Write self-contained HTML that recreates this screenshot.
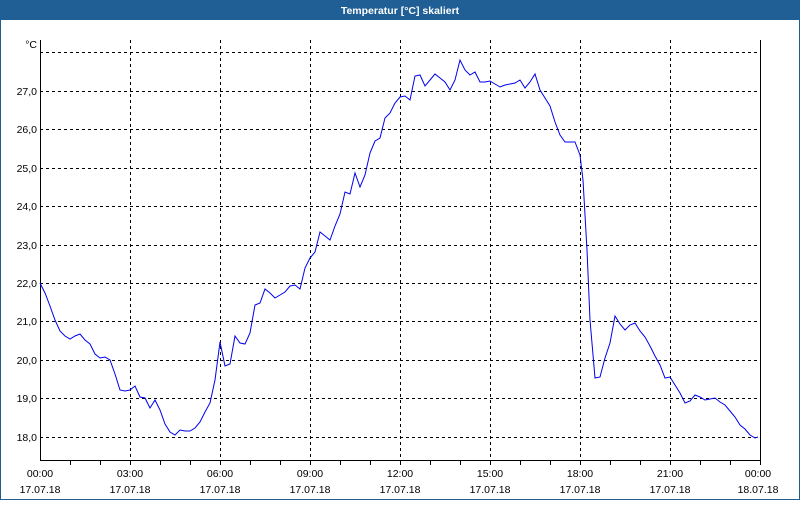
<!DOCTYPE html>
<html><head><meta charset="utf-8"><style>
body{margin:0;width:800px;height:500px;overflow:hidden;background:#fff;font-family:"Liberation Sans",sans-serif}
</style></head><body>
<svg width="800" height="500" xmlns="http://www.w3.org/2000/svg" font-family="Liberation Sans, sans-serif" font-size="10.5">
<rect x="0" y="0" width="800" height="500" fill="#fff"/>
<rect x="0" y="0" width="800" height="20" fill="#1f5f96"/>
<rect x="0.5" y="19.5" width="799" height="480" fill="none" stroke="#1f5f96"/>
<text x="400" y="14" fill="#fff" font-weight="bold" text-anchor="middle" font-size="10.5">Temperatur [°C] skaliert</text>
<g stroke="#000" stroke-dasharray="3,3" stroke-width="1" fill="none">
<path d="M130.5 40V460M220.5 40V460M310.5 40V460M400.5 40V460M490.5 40V460M580.5 40V460M670.5 40V460"/>
<path d="M40 52.5H760M40 91.5H760M40 129.5H760M40 168.5H760M40 206.5H760M40 245.5H760M40 283.5H760M40 321.5H760M40 360.5H760M40 398.5H760M40 437.5H760"/>
</g>
<path d="M40.5 40V460.5H760.5V40" stroke="#000" fill="none"/>
<path d="M70.5 461v4M100.5 461v4M130.5 461v4M160.5 461v4M190.5 461v4M220.5 461v4M250.5 461v4M280.5 461v4M310.5 461v4M340.5 461v4M370.5 461v4M400.5 461v4M430.5 461v4M460.5 461v4M490.5 461v4M520.5 461v4M550.5 461v4M580.5 461v4M610.5 461v4M640.5 461v4M670.5 461v4M700.5 461v4M730.5 461v4M760.5 461v4" stroke="#000"/>
<g text-anchor="end" fill="#000">
<text x="37" y="48">°C</text>
<text x="37" y="95">27,0</text><text x="37" y="133">26,0</text><text x="37" y="172">25,0</text><text x="37" y="210">24,0</text><text x="37" y="249">23,0</text><text x="37" y="287">22,0</text><text x="37" y="325">21,0</text><text x="37" y="364">20,0</text><text x="37" y="402">19,0</text><text x="37" y="441">18,0</text>
</g>
<g text-anchor="middle" fill="#000">
<text x="40" y="477">00:00</text><text x="40" y="493">17.07.18</text>
<text x="130" y="477">03:00</text><text x="130" y="493">17.07.18</text>
<text x="220" y="477">06:00</text><text x="220" y="493">17.07.18</text>
<text x="310" y="477">09:00</text><text x="310" y="493">17.07.18</text>
<text x="400" y="477">12:00</text><text x="400" y="493">17.07.18</text>
<text x="490" y="477">15:00</text><text x="490" y="493">17.07.18</text>
<text x="580" y="477">18:00</text><text x="580" y="493">17.07.18</text>
<text x="670" y="477">21:00</text><text x="670" y="493">17.07.18</text>
<text x="758" y="477">00:00</text><text x="758" y="493">18.07.18</text>
</g>
<polyline fill="none" stroke="#0000ee" stroke-width="1" points="40,283 45,293 50,306 55,320 60,331 65,336 70,339 75,336 80,334 85,340 90,344 95,354 100,358 105,357 110,360 115,374 120,390 125,391 130,390 135,386 140,397 145,398 150,408 155,400 160,410 165,424 170,432 175,435 180,430 185,431 190,431 195,428 200,422 205,412 210,403 215,380 220,342 225,366 230,364 235,336 240,343 245,344 250,333 255,305 260,303 265,289 270,293 275,298 280,295 285,292 290,286 295,285 300,289 305,268 310,258 315,252 320,232 325,236 330,240 335,226 340,214 345,192 350,194 355,173 360,187 365,175 370,153 375,141 380,138 385,118 390,113 395,103 400,97 405,96 410,100 415,76 420,75 425,86 430,80 435,74 440,78 445,82 450,90 455,80 460,60 465,70 470,75 475,72 480,82 485,82 490,81 495,84 500,87 505,85 510,84 515,83 520,80 525,88 530,82 535,74 540,90 545,98 550,106 555,122 560,135 565,142 570,142 575,142 580,155 583,180 587,250 590,320 595,378 600,377 605,358 610,343 615,316 620,324 625,330 630,325 635,323 640,331 645,337 650,346 655,356 660,365 665,378 670,377 675,385 680,393 685,403 690,401 695,395 700,397 705,400 710,399 715,398 720,402 725,405 730,411 735,417 740,425 745,429 750,435 755,438 758,437"/>
</svg>
</body></html>
